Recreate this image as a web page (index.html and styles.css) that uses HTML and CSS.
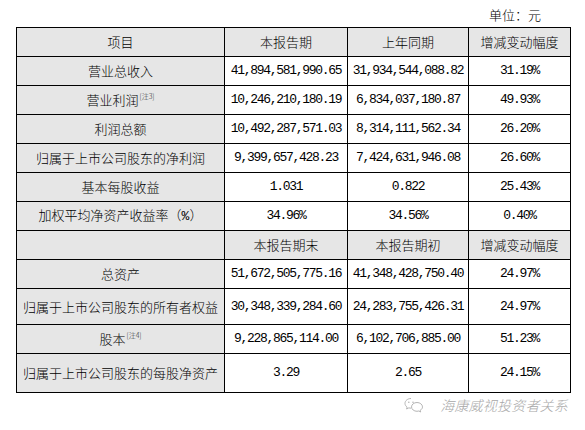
FILE: index.html
```html
<!DOCTYPE html>
<html lang="zh">
<head>
<meta charset="utf-8">
<link rel="stylesheet" href="styles.css">
</head>
<body>
<div class="page">
  <div class="unit">单位：元</div>
  <table class="fin">
    <colgroup>
      <col class="c1"><col class="c2"><col class="c3"><col class="c4">
    </colgroup>
    <tr class="r29 head">
      <td class="label">项目</td><td class="cn">本报告期</td><td class="cn">上年同期</td><td class="cn">增减变动幅度</td>
    </tr>
    <tr class="r29">
      <td class="label">营业总收入</td><td class="num">41,894,581,990.65</td><td class="num">31,934,544,088.82</td><td class="num">31.19%</td>
    </tr>
    <tr class="r29">
      <td class="label">营业利润<sup class="note">[注3]</sup></td><td class="num">10,246,210,180.19</td><td class="num">6,834,037,180.87</td><td class="num">49.93%</td>
    </tr>
    <tr class="r29">
      <td class="label">利润总额</td><td class="num">10,492,287,571.03</td><td class="num">8,314,111,562.34</td><td class="num">26.20%</td>
    </tr>
    <tr class="r29">
      <td class="label">归属于上市公司股东的净利润</td><td class="num">9,399,657,428.23</td><td class="num">7,424,631,946.08</td><td class="num">26.60%</td>
    </tr>
    <tr class="r29">
      <td class="label">基本每股收益</td><td class="num">1.031</td><td class="num">0.822</td><td class="num">25.43%</td>
    </tr>
    <tr class="r29">
      <td class="label">加权平均净资产收益率（<span class="half">%</span>）</td><td class="num">34.96%</td><td class="num">34.56%</td><td class="num">0.40%</td>
    </tr>
    <tr class="r29 head">
      <td class="label"></td><td class="cn">本报告期末</td><td class="cn">本报告期初</td><td class="cn">增减变动幅度</td>
    </tr>
    <tr class="r29">
      <td class="label">总资产</td><td class="num">51,672,505,775.16</td><td class="num">41,348,428,750.40</td><td class="num">24.97%</td>
    </tr>
    <tr class="r36">
      <td class="label">归属于上市公司股东的所有者权益</td><td class="num">30,348,339,284.60</td><td class="num">24,283,755,426.31</td><td class="num">24.97%</td>
    </tr>
    <tr class="r29">
      <td class="label">股本<sup class="note">[注4]</sup></td><td class="num">9,228,865,114.00</td><td class="num">6,102,706,885.00</td><td class="num">51.23%</td>
    </tr>
    <tr class="r39">
      <td class="label">归属于上市公司股东的每股净资产</td><td class="num">3.29</td><td class="num">2.65</td><td class="num">24.15%</td>
    </tr>
  </table>
  <div class="wm">
    <svg class="wm-icon" width="20" height="16" viewBox="0 0 20 16" aria-hidden="true">
      <path d="M7 1.5C3.7 1.5 1 3.7 1 6.4c0 1.5.8 2.8 2.1 3.7L2.6 12l2.2-1.1c.7.2 1.4.3 2.2.3" fill="none" stroke="#b5b5b5" stroke-width="1"/>
      <path d="M13 5.5c-3 0-5.5 2-5.5 4.4s2.5 4.4 5.5 4.4c.6 0 1.2-.1 1.8-.3l1.9 1-.5-1.7c1.4-.8 2.3-2 2.3-3.4 0-2.4-2.5-4.4-5.5-4.4z" fill="none" stroke="#b5b5b5" stroke-width="1"/>
      <circle cx="4.8" cy="5.2" r=".8" fill="#b5b5b5"/>
      <circle cx="9" cy="5.2" r=".8" fill="#b5b5b5"/>
    </svg>
    <span class="wm-text">海康威视投资者关系</span>
  </div>
</div>
</body>
</html>
```

FILE: styles.css
```css
html, body {
  margin: 0;
  padding: 0;
  background: #ffffff;
}

body {
  font-family: "Noto Sans CJK SC", "Noto Sans", sans-serif;
  font-weight: 300;
  color: #000;
}

.page {
  width: 585px;
  height: 430px;
  padding: 7px 0 0 16px;
  box-sizing: border-box;
}

.unit {
  width: 525px;
  text-align: right;
  font-size: 13px;
  line-height: 16px;
  height: 20px;
}

.fin {
  border-collapse: collapse;
  table-layout: fixed;
  width: 554px;
}

.c1 { width: 208px; }
.c2 { width: 123px; }
.c3 { width: 121px; }
.c4 { width: 102px; }

.fin td {
  border: 1px solid #000;
  padding: 0;
  text-align: center;
  vertical-align: middle;
  font-size: 13px;
  line-height: 16px;
  white-space: nowrap;
  overflow: hidden;
}

.r29 { height: 29px; }
.r36 { height: 36px; }
.r39 { height: 39px; }

.label {
  background: #e6e6e6;
}

.head td {
  background: #e6e6e6;
}

.num {
  font-family: "Liberation Mono", monospace;
  font-weight: 400;
  letter-spacing: -1.3px;
  font-size: 13px;
}

.half {
  font-family: "Liberation Mono", monospace;
  font-weight: 400;
}

.note {
  font-size: 7px;
  line-height: 7px;
  vertical-align: 6px;
  color: #222;
  margin-left: 1px;
}

.wm {
  display: flex;
  align-items: center;
  justify-content: flex-end;
  width: 552px;
  margin-top: 3px;
  gap: 6px;
}

.wm-icon {
  margin-right: 10px;
}

.wm-text {
  font-size: 14px;
  line-height: 18px;
  color: #a8a8a8;
  font-style: italic;
  letter-spacing: 0.2px;
}
```
